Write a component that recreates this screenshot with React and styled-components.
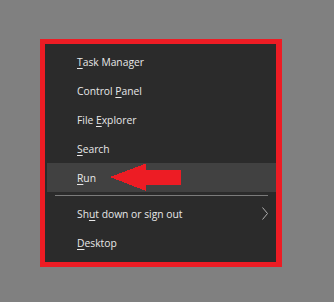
import React from "react";
import styled, { createGlobalStyle } from "styled-components";

const Global = createGlobalStyle`
  html, body { margin: 0; padding: 0; background: #808080; }
  body { width: 334px; height: 302px; overflow: hidden; font-family: "Open Sans", "Noto Sans", sans-serif; }
`;

const Page = styled.div`
  padding: 39px 0 0 40px;
`;

const Menu = styled.div`
  box-sizing: border-box;
  width: 242px;
  height: 228px;
  border: 5px solid #ed1c24;
  border-right-width: 6px;
  background: #2b2b2b;
  padding: 3px 0 0 2px;
  display: flex;
  flex-direction: column;
`;

const Item = styled.div`
  position: relative;
  height: 29px;
  display: flex;
  align-items: center;
  padding-left: 30px;
  padding-right: 8px;
  background: ${(p) => (p.$active ? "#414141" : "transparent")};
  color: #e8e8e8;
  font-size: 10.3px;
  letter-spacing: 0;
`;

const Label = styled.span`
  flex: 1;
  white-space: pre;
`;

const Key = styled.span`
  text-decoration: underline;
  text-decoration-thickness: 1px;
  text-underline-offset: 2px;
`;

const Separator = styled.div`
  height: 7px;
  display: flex;
  align-items: center;
  padding: 0 8px 0 8px;
  &::after {
    content: "";
    flex: 1;
    height: 1px;
    background: #7b7b7b;
  }
`;

const Chevron = styled.svg`
  width: 6px;
  height: 13px;
`;

const Arrow = styled.svg`
  position: absolute;
  left: 62px;
  top: 0;
  width: 73px;
  height: 29px;
`;

const items = [
  ["", "T", "ask Manager"],
  ["Control ", "P", "anel"],
  ["File ", "E", "xplorer"],
  ["", "S", "earch"],
];

export default function App() {
  return (
    <>
      <Global />
      <Page>
        <Menu>
          {items.map(([a, k, b]) => (
            <Item key={a + k + b}>
              <Label>
                {a}
                <Key>{k}</Key>
                {b}
              </Label>
            </Item>
          ))}
          <Item $active>
            <Label>
              <Key>R</Key>un
            </Label>
            <Arrow viewBox="0 0 73 29" shapeRendering="crispEdges">
              <polygon
                points="1,14 37,0.5 37,6.5 72,6.5 72,22 37,22 37,28 1,14"
                fill="#ed1c24"
              />
            </Arrow>
          </Item>
          <Separator />
          <Item>
            <Label>
              Sh<Key>u</Key>t down or sign out
            </Label>
            <Chevron viewBox="0 0 6 13">
              <polyline points="0.5,0.5 5.5,6.5 0.5,12.5" fill="none" stroke="#b0b0b0" strokeWidth="1" />
            </Chevron>
          </Item>
          <Item>
            <Label>
              <Key>D</Key>esktop
            </Label>
          </Item>
        </Menu>
      </Page>
    </>
  );
}
